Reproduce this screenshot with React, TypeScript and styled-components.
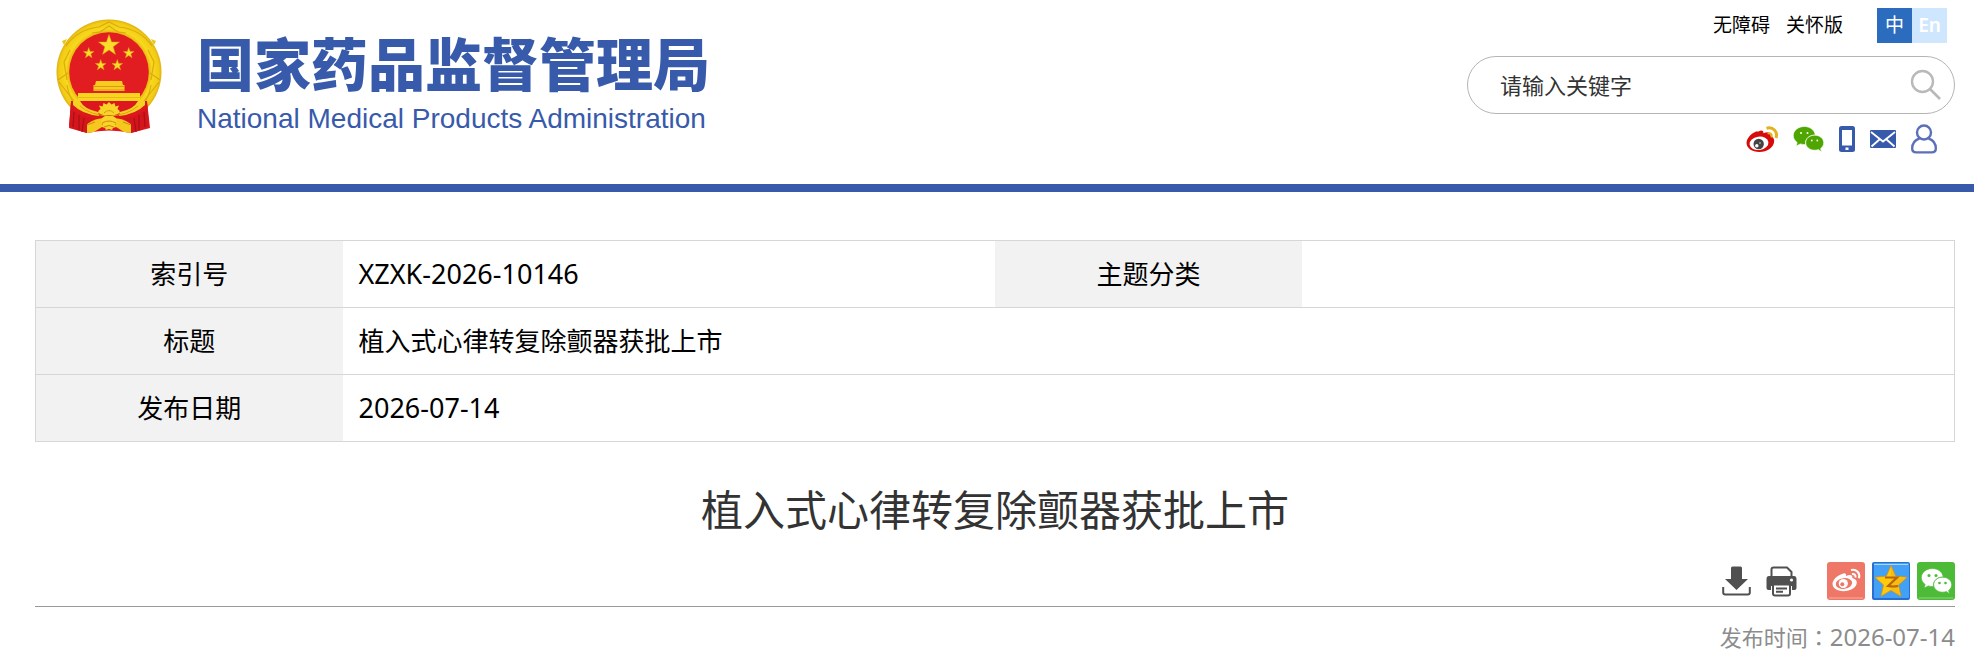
import React from 'react';
import styled, { createGlobalStyle } from 'styled-components';

const GlobalStyle = createGlobalStyle`
  * { box-sizing: border-box; }
  body {
    margin: 0;
    background: #fff;
    color: #000;
    font-family: "Noto Sans", "Noto Sans CJK SC", sans-serif;
  }
  a { color: inherit; text-decoration: none; }
  button { padding: 0; border: 0; background: none; font: inherit; cursor: pointer; }
  svg { display: block; }
`;

const Header = styled.header`
  display: flex;
  justify-content: space-between;
  align-items: flex-start;
  padding: 8px 19px 30px 56px;
  border-bottom: 8px solid #385aab;
`;

const Brand = styled.a`
  display: flex;
  gap: 35px;
  padding-top: 11px;
  color: #385aab;
`;

const BrandText = styled.span`
  display: flex;
  flex-direction: column;
  gap: 6px;
  padding-top: 8px;
`;

const BrandName = styled.span`
  font-family: "Noto Sans CJK SC", sans-serif;
  font-size: 57px;
  font-weight: 900;
  line-height: 68px;
  white-space: nowrap;
`;

const BrandLatin = styled.span`
  font-family: "Liberation Sans", sans-serif;
  font-size: 28px;
  line-height: 36px;
  white-space: nowrap;
`;

const Tools = styled.div`
  display: flex;
  flex-direction: column;
  width: 488px;
`;

const TopLinks = styled.nav`
  display: flex;
  justify-content: flex-end;
  align-items: center;
  gap: 16px;
  padding-right: 8px;
  font-size: 19px;
  line-height: 32px;
`;

const TopLink = styled.a`
  padding-bottom: 2px;
`;

const Languages = styled.div`
  display: flex;
  margin-left: 18px;
`;

const Language = styled.button<{ $active?: boolean }>`
  width: 35px;
  height: 35px;
  padding-bottom: 2px;
  background: ${(p) => (p.$active ? '#2c6cbf' : '#cee7ff')};
  color: #fff;
  font-size: 19px;
  font-weight: ${(p) => (p.$active ? 400 : 600)};
  line-height: 32px;
`;

const Search = styled.form`
  display: flex;
  align-items: center;
  height: 58px;
  margin-top: 13px;
  padding: 0 12px 0 32px;
  border: 1px solid #b5b5b5;
  border-radius: 29px;
`;

const SearchInput = styled.input`
  flex: 1;
  min-width: 0;
  padding: 0;
  border: 0;
  outline: 0;
  background: none;
  color: #333;
  font: inherit;
  font-size: 22px;
  &::placeholder { color: #333; opacity: 1; }
`;

const Channels = styled.div`
  display: flex;
  justify-content: flex-end;
  align-items: center;
  gap: 15px;
  height: 30px;
  margin-top: 10px;
  padding-right: 18px;
`;

const Main = styled.main`
  padding: 48px 19px 16px 35px;
`;

const InfoTable = styled.table`
  width: 100%;
  table-layout: fixed;
  border-collapse: collapse;
  border: 1px solid #d6d6d6;
  font-size: 26px;
  line-height: 36px;
`;

const Row = styled.tr`
  height: 67px;
  border-bottom: 1px solid #d6d6d6;
`;

const LabelColumn = styled.col`
  width: 16%;
`;

const ValueColumn = styled.col`
  width: 34%;
`;

const Label = styled.th`
  padding: 0;
  background: #f2f2f2;
  font-weight: 400;
`;

const Value = styled.td<{ $latin?: boolean }>`
  padding: 0 16px;
  font-size: ${(p) => (p.$latin ? '27px' : '26px')};
`;

const Title = styled.h1`
  margin: 38px 0 0;
  color: #333;
  font-size: 42px;
  font-weight: 400;
  line-height: 60px;
  text-align: center;
`;

const Actions = styled.div`
  display: flex;
  justify-content: flex-end;
  align-items: center;
  gap: 7px;
  margin-top: 22px;
  padding-bottom: 6px;
  border-bottom: 1px solid #999;
`;

const DocumentActions = styled.div`
  display: flex;
  align-items: center;
  gap: 15px;
  margin-right: 23px;
`;

const Published = styled.p`
  margin: 13px 0 0;
  color: #8c8c8c;
  font-family: "Noto Sans CJK SC", sans-serif;
  font-size: 22px;
  line-height: 32px;
  text-align: right;
`;

const Colon = styled.span`
  font-family: "Noto Sans CJK TC", sans-serif;
`;

const PublishedDate = styled.time`
  font-family: "Noto Sans", sans-serif;
  font-size: 24px;
`;

const starPoints = (cx: number, cy: number, r: number, inner = 0.4) =>
  Array.from({ length: 10 }, (_, i) => {
    const radius = i % 2 ? r * inner : r;
    const a = (Math.PI / 5) * i - Math.PI / 2;
    return `${(cx + radius * Math.cos(a)).toFixed(2)},${(cy + radius * Math.sin(a)).toFixed(2)}`;
  }).join(' ');

const Emblem = () => (
  <svg width="106" height="116" viewBox="0 0 106 116" role="img" aria-label="国徽">
    <defs>
      <radialGradient id="gold" cx="50%" cy="50%" r="50%">
        <stop offset="74%" stopColor="#e3ae0c" />
        <stop offset="82%" stopColor="#f8d81e" />
        <stop offset="95%" stopColor="#f2cc14" />
        <stop offset="100%" stopColor="#dfb012" />
      </radialGradient>
    </defs>
    <circle cx="53" cy="53" r="52.5" fill="url(#gold)" />
    <path d="M6 22l5-2-3 6zM100 22l-5-2 3 6z" fill="#eec414" />
    <g fill="none" stroke="#cf9d0c" strokeWidth="1.200" opacity=".7">
      <path d="M10 27Q22 10 43 8L53 3l10 5q21 2 33 19" />
      <path d="M36 14l8-1 9-6 9 6 8 1" />
      <path d="M14 31l-6 12 3 18M92 31l6 12-3 18M2 61l10-7M104 61l-10-7M3 63l15 19M103 63L88 82" />
      <path d="M11 66q2 12 8 20M95 66q-2 12-8 20" />
    </g>
    <circle cx="53" cy="53" r="39.800" fill="#e21d22" />
    <path d="M15 82h76l3 27-19 5q-22-5-44 0l-18-5z" fill="#dc181e" />
    <g fill="#fadc2a" stroke="#d9a010" strokeWidth=".5">
      <polygon points={starPoints(53, 26.5, 11)} />
      <polygon points={starPoints(32.7, 34.2, 5.6)} />
      <polygon points={starPoints(72.7, 34.2, 5.6)} />
      <polygon points={starPoints(44.7, 46.2, 5.6)} />
      <polygon points={starPoints(61.3, 46.2, 5.6)} />
    </g>
    <path d="M40 62h26l1 4h1.500v6H37.500v-6H39z" fill="#f7cb20" />
    <path d="M38 67.500h30M38 71h30" stroke="#d99a12" />
    <path d="M22 74h62v8H22z" fill="#fad51f" />
    <path d="M22 78.500h62" stroke="#e6b015" strokeWidth=".8" />
    <path d="M17 82h7q4 8 18 11l1 4q-17-2-26-11zM89 82h-7q-4 8-18 11l-1 4q17-2 26-11z" fill="#f7d024" />
    <path d="M42 94q0-3 2.500-4l-1.500-3.500 3.500 1 1-3.500 3 1.500 2.500-2.500 2.500 2.500 3-1.500 1 3.500 3.500-1-1.500 3.500Q64 91 64 94l-5 2H47z" fill="#f8d328" />
    <path d="M48 94q5-5 10 0" fill="none" stroke="#d99a12" />
    <path d="M24 87q10 9 29 10 19-1 29-10" fill="none" stroke="#dba010" />
    <path d="M31 105q8-6 18-6l-3 6 4 3h-4l-8 5-7 1zM75 105q-8-6-18-6l3 6-4 3h4l8 5 7 1z" fill="#f5c81d" />
    <path d="M46 99l3-2h8l3 2 1 5-2 1 1 3-3 1-1 2-3-1-3 1-1-2-3-1 1-3-2-1z" fill="#f8d328" />
    <path d="M46 104q7-4 14 0M48 108q5-3 10 0" fill="none" stroke="#d18a10" />
    <path d="M31 106l8-3M75 106l-8-3" stroke="#d18a10" />
    <path d="M15 84l2 7q8 7 22 8l-8 6v9l-10-3-8-4zM91 84l-2 7q-8 7-22 8l8 6v9l10-3 8-4z" fill="#d5151c" />
    <path d="M18 93l-1 15M23 96v15M28 99l-2 14M88 93l1 15M83 96v15M78 99l2 14" stroke="#a90f15" strokeWidth="1.200" />
  </svg>
);

const SearchIcon = () => (
  <svg width="32" height="32" viewBox="0 0 32 32" fill="none" stroke="#b9b9b9" strokeWidth="2.400">
    <circle cx="12.500" cy="12.500" r="10.500" />
    <path d="M20 20l10 10" strokeWidth="2.600" />
  </svg>
);

const WeiboIcon = () => (
  <svg width="32" height="27" viewBox="0 0 32 27">
    <path d="M12.500 5.500c3-1.600 5-1.200 5 1.800 4-1.700 7.500-1.600 7 2.400 2.200 1 3.700 2.600 3.700 5.300C28 21.500 21 26 13.500 26 6 26 .5 22 .5 17 .5 12.500 5 7.500 10 5.500z" fill="#d80b0b" />
    <ellipse cx="13" cy="17.300" rx="9.500" ry="6.700" fill="#fff" transform="rotate(-8 13 17.300)" />
    <circle cx="12.700" cy="18" r="5.200" fill="#444" />
    <circle cx="10.800" cy="19.700" r="1.700" fill="#fff" />
    <circle cx="14" cy="17" r=".8" fill="#ddd" />
    <path d="M20.500 2.200C27 .3 32 5.500 30 12" fill="none" stroke="#e4b21c" strokeWidth="3" />
    <path d="M21.500 7.500c3-.9 5 1.200 4 4" fill="none" stroke="#e4b21c" strokeWidth="2.200" />
  </svg>
);

const WechatShape = () => (
  <>
    <path d="M11.500.5C5.300.5.300 4.500.300 9.500c0 2.900 1.500 5.300 3.900 7l-1.200 3.600 4.300-2.200c1.300.4 2.700.6 4.200.6h1c-.8-5.200 3.600-9.600 9.800-9.500C21.500 4 17 .5 11.500.5z" />
    <path d="M30.700 16.700c0-4.300-4-7.500-9-7.500s-9 3.200-9 7.500 4 7.500 9 7.500c1.300 0 2.500-.2 3.600-.6l3.200 2.100-.9-3.200c1.900-1.400 3.100-3.400 3.100-5.800z" />
  </>
);

const WechatIcon = () => (
  <svg width="31" height="26" viewBox="0 0 31 26">
    <g fill="#4fa600" stroke="#fff" strokeWidth=".6"><WechatShape /></g>
    <g fill="#fff">
      <circle cx="8" cy="7" r="1" /><circle cx="14.500" cy="7" r="1" />
      <circle cx="18.800" cy="14.500" r=".9" /><circle cx="24.300" cy="14.500" r=".9" />
    </g>
  </svg>
);

const PhoneIcon = () => (
  <svg width="16" height="26" viewBox="0 0 16 26">
    <rect width="16" height="26" rx="2.500" fill="#385aab" />
    <rect x="3" y="4" width="10" height="15.500" fill="#fff" />
    <rect x="6.500" y="21.500" width="3" height="2.500" fill="#fff" />
  </svg>
);

const MailIcon = () => (
  <svg width="26" height="18" viewBox="0 0 26 18">
    <rect width="26" height="18" rx="1" fill="#385aab" />
    <path d="M1 2l12 9.500L25 2M1.500 16.500L10 9M24.500 16.500L16 9" fill="none" stroke="#fff" strokeWidth="1.800" />
  </svg>
);

const UserIcon = () => (
  <svg width="26" height="30" viewBox="0 0 26 30" fill="none" stroke="#5b70b8" strokeWidth="2.400">
    <circle cx="13" cy="8.500" r="7" />
    <path d="M8.500 14.500C4 16 1.200 19.500 1.200 24.500c0 2.800 1.300 3.900 4 3.900h15.600c2.700 0 4-1.100 4-3.900 0-5-2.800-8.500-7.300-10" />
  </svg>
);

const DownloadIcon = () => (
  <svg width="29" height="30" viewBox="0 0 29 30">
    <path d="M9 2q0-1.500 1.500-1.500h8q1.500 0 1.500 1.500v11h6L14.500 24 3 13h6z" fill="#505050" />
    <path d="M1.200 21v5.500q0 2 2 2h22.600q2 0 2-2V21" fill="none" stroke="#505050" strokeWidth="2" />
  </svg>
);

const PrintIcon = () => (
  <svg width="31" height="31" viewBox="0 0 31 31">
    <path d="M5.500 11V3.500q0-2 2-2H21l4.500 4.500v5" fill="#fff" stroke="#505050" strokeWidth="2" />
    <path d="M3 10h25q2.500 0 2.500 3v9q0 2-2 2H26v-4H5v4H2.500q-2 0-2-2v-9q0-3 2.500-3z" fill="#505050" />
    <circle cx="25.500" cy="14" r="1.600" fill="#fff" />
    <path d="M7 18.500h17v9q0 2-2 2H9q-2 0-2-2z" fill="#fff" stroke="#505050" strokeWidth="2" />
    <path d="M10 22.500h11M10 25.800h7" stroke="#505050" strokeWidth="1.900" />
  </svg>
);

const ShareWeiboIcon = () => (
  <svg width="38" height="38" viewBox="0 0 38 38">
    <rect width="38" height="38" rx="3" fill="#ee7767" />
    <path d="M2 36h34" stroke="#f7aea4" />
    <path d="M15 12c3-1.500 4.500-.6 4 2 4-1.700 7-1.200 6.300 2 2 .7 4.500 1.900 4.500 4.500 0 5-6.500 8.700-13.300 8.700C10 29.200 5.500 26 5.500 21.800 5.500 18 10 13.500 15 12z" fill="#fff" />
    <ellipse cx="17" cy="21.500" rx="8.300" ry="5.400" fill="#ee7767" transform="rotate(-8 17 21.500)" />
    <circle cx="16.300" cy="21.500" r="4.600" fill="#fff" />
    <circle cx="15.300" cy="22.300" r="2" fill="#ee7767" />
    <path d="M24 8c5.500-1.200 9.500 3 8 8.300M25 12c2.500-.4 4 1.200 3.400 3.500" fill="none" stroke="#fff" strokeWidth="2" />
  </svg>
);

const ShareQzoneIcon = () => (
  <svg width="38" height="38" viewBox="0 0 38 38">
    <rect width="38" height="38" rx="2" fill="#2a6fd0" />
    <rect x="2" y="1" width="35" height="35" rx="1" fill="#42a0f5" />
    <path d="M2 2.500h34" stroke="#a7d7ff" />
    <polygon points={starPoints(19, 20.5, 17, 0.46)} fill="#ffc90e" stroke="#dd9310" strokeWidth=".8" />
    <path d="M19 4l4 12 11 .5-9 7.500 3 10-9-5.500z" fill="#f2ad12" opacity=".5" />
    <path d="M13 15.500h12l-9 8.500c4 .8 7 .6 10 0" fill="none" stroke="#b5650c" strokeWidth="2.200" />
  </svg>
);

const ShareWechatIcon = () => (
  <svg width="38" height="38" viewBox="0 0 38 38">
    <rect width="38" height="38" rx="3" fill="#4dbb38" />
    <path d="M2 36h34" stroke="#8ed680" />
    <g transform="translate(4 6)" fill="#fff" stroke="#4dbb38" strokeWidth=".7"><WechatShape /></g>
    <g fill="#4dbb38">
      <circle cx="12" cy="13.500" r="1.500" /><circle cx="19" cy="13.500" r="1.500" />
      <circle cx="22.500" cy="21" r="1.300" /><circle cx="28.500" cy="21" r="1.300" />
    </g>
  </svg>
);

export default function App() {
  return (
    <>
      <GlobalStyle />
      <Header>
        <Brand href="#">
          <Emblem />
          <BrandText>
            <BrandName>国家药品监督管理局</BrandName>
            <BrandLatin>National Medical Products Administration</BrandLatin>
          </BrandText>
        </Brand>
        <Tools>
          <TopLinks>
            <TopLink href="#">无障碍</TopLink>
            <TopLink href="#">关怀版</TopLink>
            <Languages>
              <Language type="button" $active>中</Language>
              <Language type="button">En</Language>
            </Languages>
          </TopLinks>
          <Search onSubmit={(e) => e.preventDefault()}>
            <SearchInput type="text" aria-label="搜索" placeholder="请输入关键字" />
            <button type="submit" aria-label="搜索"><SearchIcon /></button>
          </Search>
          <Channels>
            <a href="#" aria-label="微博"><WeiboIcon /></a>
            <a href="#" aria-label="微信"><WechatIcon /></a>
            <a href="#" aria-label="手机版"><PhoneIcon /></a>
            <a href="#" aria-label="邮箱"><MailIcon /></a>
            <a href="#" aria-label="个人中心"><UserIcon /></a>
          </Channels>
        </Tools>
      </Header>
      <Main>
        <InfoTable>
          <colgroup>
            <LabelColumn />
            <ValueColumn />
            <LabelColumn />
            <ValueColumn />
          </colgroup>
          <tbody>
            <Row>
              <Label scope="row">索引号</Label>
              <Value $latin>XZXK-2026-10146</Value>
              <Label scope="row">主题分类</Label>
              <Value />
            </Row>
            <Row>
              <Label scope="row">标题</Label>
              <Value colSpan={3}>植入式心律转复除颤器获批上市</Value>
            </Row>
            <Row>
              <Label scope="row">发布日期</Label>
              <Value $latin colSpan={3}>2026-07-14</Value>
            </Row>
          </tbody>
        </InfoTable>
        <Title>植入式心律转复除颤器获批上市</Title>
        <Actions>
          <DocumentActions>
            <button type="button" aria-label="下载"><DownloadIcon /></button>
            <button type="button" aria-label="打印"><PrintIcon /></button>
          </DocumentActions>
          <a href="#" aria-label="分享到微博"><ShareWeiboIcon /></a>
          <a href="#" aria-label="分享到QQ空间"><ShareQzoneIcon /></a>
          <a href="#" aria-label="分享到微信"><ShareWechatIcon /></a>
        </Actions>
        <Published>
          发布时间<Colon lang="zh-TW">：</Colon>
          <PublishedDate dateTime="2026-07-14">2026-07-14</PublishedDate>
        </Published>
      </Main>
    </>
  );
}
